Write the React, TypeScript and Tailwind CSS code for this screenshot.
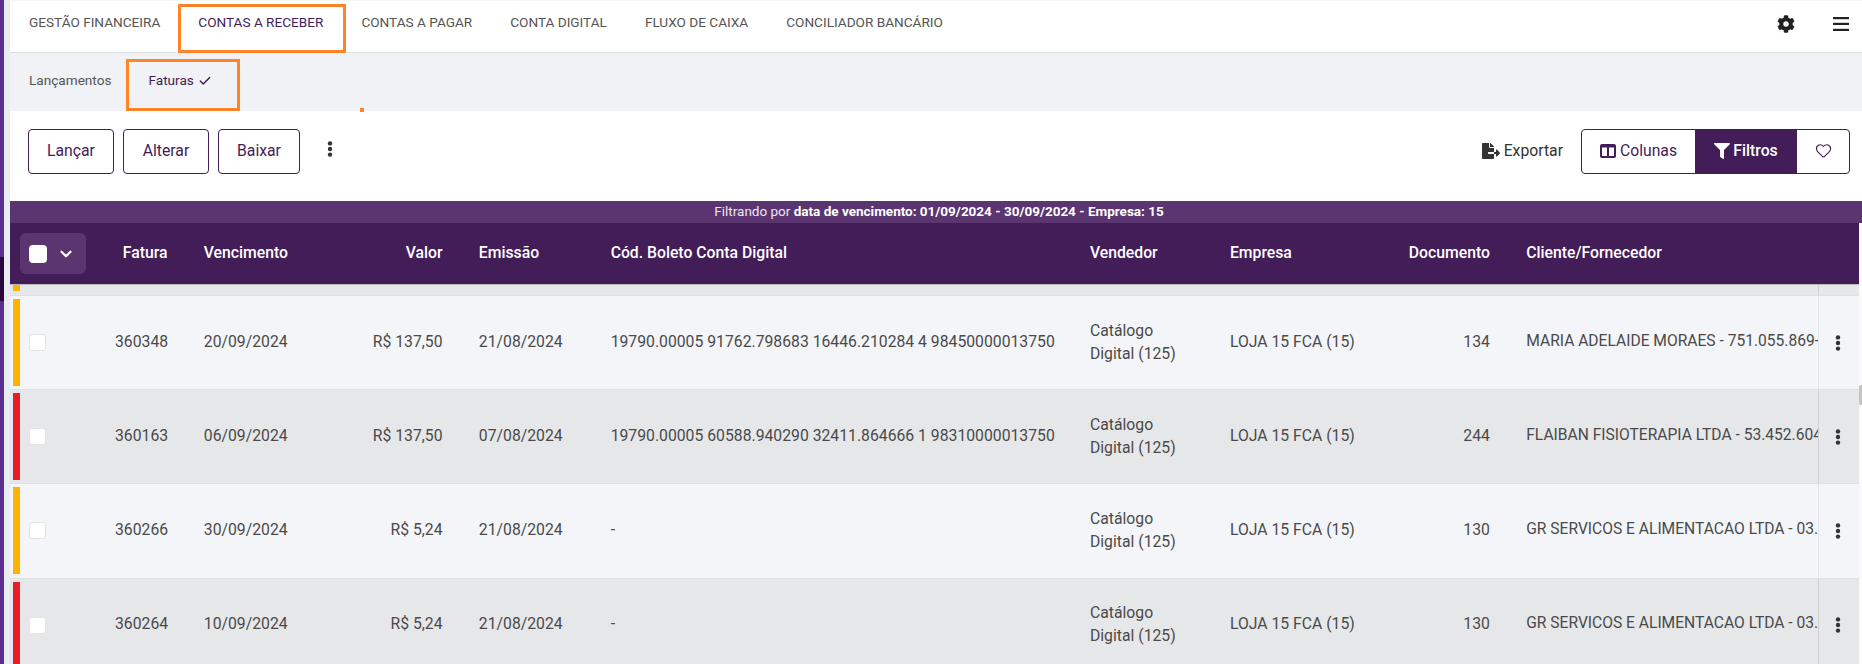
import { Check, ChevronDown, Heart } from "lucide-react";
import { FaCog, FaFileExport, FaFilter } from "react-icons/fa";

const rows = [
  { id: "360348", venc: "20/09/2024", valor: "R$ 137,50", em: "21/08/2024", cod: "19790.00005 91762.798683 16446.210284 4 98450000013750", doc: "134", cli: "MARIA ADELAIDE MORAES - 751.055.869-72", yellow: true },
  { id: "360163", venc: "06/09/2024", valor: "R$ 137,50", em: "07/08/2024", cod: "19790.00005 60588.940290 32411.864666 1 98310000013750", doc: "244", cli: "FLAIBAN FISIOTERAPIA LTDA - 53.452.604/0001-10", yellow: false },
  { id: "360266", venc: "30/09/2024", valor: "R$ 5,24", em: "21/08/2024", cod: "-", doc: "130", cli: "GR SERVICOS E ALIMENTACAO LTDA - 03.218.441/0001-50", yellow: true },
  { id: "360264", venc: "10/09/2024", valor: "R$ 5,24", em: "21/08/2024", cod: "-", doc: "130", cli: "GR SERVICOS E ALIMENTACAO LTDA - 03.218.441/0001-50", yellow: false },
];

const gridClass =
  "grid flex-1 min-w-0 h-full items-center gap-x-[36.3px] grid-cols-[68.7px_52.5px_85.3px_117.2px_95.5px_443px_103.7px_139.7px_84px_minmax(0,1fr)]";

function Dots() {
  return (
    <svg width="6" height="16" viewBox="0 0 6 16" fill="currentColor">
      <circle cx="3" cy="2.4" r="2.2" />
      <circle cx="3" cy="8" r="2.2" />
      <circle cx="3" cy="13.6" r="2.2" />
    </svg>
  );
}

function Row({ r, i }: { r: (typeof rows)[number]; i: number }) {
  return (
    <div className={`flex h-[94.2px] border-b border-[#dfe0e2] ${i % 2 === 0 ? "bg-[#f3f5f9]" : "bg-[#e6e7e9]"}`}>
      <div className={gridClass}>
        <div className="flex h-full items-center pl-[3px]">
          <div className={`h-[87px] w-[7px] ${r.yellow ? "bg-[#ffb300]" : "bg-[#e81c24]"}`} />
          <div className="ml-[8.5px] h-[17px] w-[17px] rounded-[3px] border border-[#e4e4e4] bg-white" />
        </div>
        <div className="mt-[-2px] text-right">{r.id}</div>
        <div className="mt-[-2px]">{r.venc}</div>
        <div className="mt-[-2px] text-right">{r.valor}</div>
        <div className="mt-[-2px]">{r.em}</div>
        <div className="mt-[-2px] whitespace-nowrap">{r.cod}</div>
        <div className="mt-[-2px] leading-[23px]">Catálogo<br />Digital (125)</div>
        <div className="mt-[-2px]">LOJA 15 FCA (15)</div>
        <div className="mt-[-2px] text-right">{r.doc}</div>
        <div className="mt-[-2px] overflow-hidden whitespace-nowrap text-[15.6px]">{r.cli}</div>
      </div>
      <div className={`flex w-[41px] items-center justify-center border-l ${i % 2 === 0 ? "border-[#e4e6ea]" : "border-[#cfd0d2]"} text-[#333]`}>
        <span className="ml-[-3px] flex"><Dots /></span>
      </div>
    </div>
  );
}

export default function App() {
  const tabs = ["GESTÃO FINANCEIRA", "CONTAS A RECEBER", "CONTAS A PAGAR", "CONTA DIGITAL", "FLUXO DE CAIXA", "CONCILIADOR BANCÁRIO"];
  return (
    <div className="flex h-[664px] w-[1862px] overflow-hidden bg-[#e9edf1] font-['Roboto',sans-serif] text-[15.75px] text-[#4a4a4a]">
      <div className="flex w-[4px] shrink-0 flex-col bg-[#5b2d8e]">
        <div className="h-[257px]" />
        <div className="h-[44px] bg-[#2a0a3e]" />
      </div>
      <div className="w-[6px] shrink-0" />
      <div className="flex min-w-0 flex-1 flex-col">
        {/* Top nav */}
        <div className="flex h-[53px] shrink-0 items-start justify-between border-b border-[#e0e0e0] border-t border-t-[#f5f5f5] bg-white">
          <div className="flex gap-[38px] pl-[19px] pt-[13px] text-[13.6px] leading-[16px] text-[#555]">
            {tabs.map((t, i) => (
              <div key={t} className={`relative whitespace-nowrap ${i === 1 ? "text-[#431d58]" : ""}`}>
                {t}
                {i === 1 && <span className="absolute left-[-20px] right-[-23px] top-[-10px] h-[49px] border-[3px] border-[#ff8427]" />}
              </div>
            ))}
          </div>
          <div className="flex items-center gap-[38px] pr-[13px] pt-[14px] text-[#222]">
            <FaCog className="h-[18px] w-[18px]" />
            <svg width="16" height="14" viewBox="0 0 16 14" fill="currentColor">
              <rect x="0" y="0" width="16" height="2.2" />
              <rect x="0" y="5.8" width="16" height="2.2" />
              <rect x="0" y="11.8" width="16" height="2.2" />
            </svg>
          </div>
        </div>
        {/* Sub nav */}
        <div className="relative flex h-[58px] shrink-0 gap-[37px] bg-[#f0f2f5] pl-[19px] pt-[19px] text-[13.6px] leading-[16px]">
          <div className="text-[#555]">Lançamentos</div>
          <div className="relative flex items-start text-[#431d58]">
            Faturas
            <Check className="ml-[4px] mt-[2px] h-[14px] w-[14px]" strokeWidth={2.5} />
            <span className="absolute left-[-22px] right-[-28px] top-[-13px] h-[52px] border-[3px] border-[#ff8427]" />
          </div>
          <span className="absolute bottom-[-1px] left-[350px] h-[4px] w-[4px] bg-[#ff8427]" />
        </div>
        {/* Toolbar */}
        <div className="flex h-[90px] shrink-0 items-start justify-between bg-white pl-[18px] pr-[12px] pt-[18px] text-[#431d58]">
          <div className="flex items-center gap-[9px]">
            <button className="h-[45px] w-[86px] rounded-[4px] border border-[#431d58] pb-[2px]">Lançar</button>
            <button className="h-[45px] w-[86px] rounded-[4px] border border-[#431d58] pb-[2px]">Alterar</button>
            <button className="h-[45px] w-[82px] rounded-[4px] border border-[#431d58] pb-[2px]">Baixar</button>
            <span className="ml-[18px] mt-[-5px] flex text-[#333]"><Dots /></span>
          </div>
          <div className="flex items-center">
            <div className="mr-[18px] flex items-center pb-[2px] text-[#333]">
              <FaFileExport className="mr-[4px] h-[16px] w-[18px]" />
              Exportar
            </div>
            <div className="flex h-[45px] w-[269px] overflow-hidden rounded-[4px] border border-[#431d58] pb-0">
              <div className="flex w-[113px] items-center justify-center pb-[2px]">
                <svg className="mr-[4px]" width="16" height="14" viewBox="0 0 16 14" fill="none" stroke="currentColor" strokeWidth="2">
                  <rect x="1" y="1" width="14" height="12" rx="1" />
                  <path d="M8 1v12M1 2.5h14" />
                </svg>
                Colunas
              </div>
              <div className="flex w-[102px] items-center justify-center bg-[#431d58] pb-[2px] font-medium text-white">
                <FaFilter className="mr-[3px] h-[16px] w-[16px]" />
                Filtros
              </div>
              <div className="flex flex-1 items-center justify-center pb-[3px]">
                <Heart className="h-[17px] w-[17px]" strokeWidth={1.6} />
              </div>
            </div>
          </div>
        </div>
        {/* Filter band */}
        <div className="flex h-[22px] shrink-0 items-center justify-center bg-[#5a3570] pb-[1px] pl-[6px] pr-0 text-[13.5px] text-[#ece6f0]">
          <span className="whitespace-pre">Filtrando por <b className="font-bold text-white">data de vencimento: 01/09/2024 - 30/09/2024 - Empresa: 15</b></span>
        </div>
        {/* Table */}
        <div className="flex min-h-0 flex-1 bg-white">
          <div className="min-w-0 flex-1">
            <div className="flex h-[62px] border-b border-[#b9b9bb] bg-[#431d58] font-medium text-white">
              <div className={gridClass}>
                <div className="pl-[10px]">
                  <div className="flex h-[41px] w-[66px] items-center rounded-[6px] bg-[#5a3570] pl-[9px]">
                    <div className="h-[18px] w-[18px] rounded-[4px] bg-white" />
                    <ChevronDown className="ml-[10px] h-[18px] w-[18px]" strokeWidth={3} />
                  </div>
                </div>
                <div className="mt-[-2px] text-right">Fatura</div>
                <div className="mt-[-2px]">Vencimento</div>
                <div className="mt-[-2px] text-right">Valor</div>
                <div className="mt-[-2px]">Emissão</div>
                <div className="mt-[-2px]">Cód. Boleto Conta Digital</div>
                <div className="mt-[-2px]">Vendedor</div>
                <div className="mt-[-2px]">Empresa</div>
                <div className="mt-[-2px] text-right">Documento</div>
                <div className="mt-[-2px]">Cliente/Fornecedor</div>
              </div>
              <div className="w-[41px]" />
            </div>
            <div className="flex h-[11px] border-b border-[#dfe0e2] bg-[#e6e7e9]">
              <div className="flex-1 pl-[3px]"><div className="h-[6px] w-[7px] bg-[#ffb300]" /></div>
              <div className="w-[41px] border-l border-[#cfd0d2]" />
            </div>
            {rows.map((r, i) => <Row key={r.id} r={r} i={i} />)}
          </div>
          <div className="relative w-[3px] shrink-0 bg-[#fafafa]">
            <span className="absolute left-0 top-[162px] h-[20px] w-[3px] rounded-l-[2px] bg-[#c4c4c4]" />
          </div>
        </div>
      </div>
    </div>
  );
}
